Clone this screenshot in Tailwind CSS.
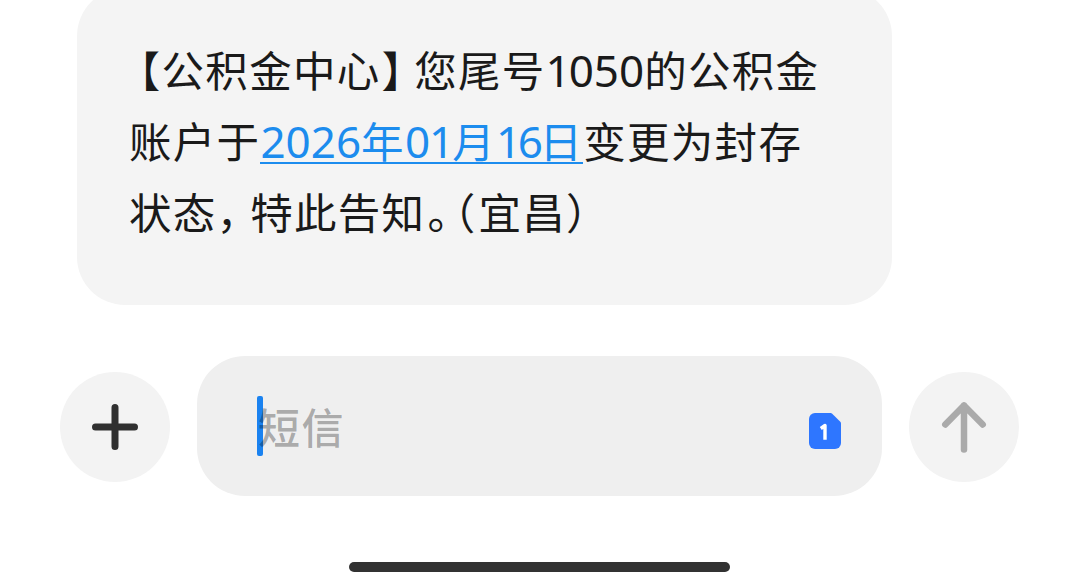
<!doctype html>
<html lang="zh-CN">
  <head>
    <meta charset="UTF-8" />
    <title>短信</title>
    <script src="https://cdn.jsdelivr.net/npm/@tailwindcss/browser@4"></script>
  </head>

  <body class="bg-white h-[588px] overflow-hidden font-['Noto_Sans_CJK_SC',sans-serif]">
    <main class="flex flex-col h-full">
      <!-- received message, half-width punctuation -->
      <div class="-mt-3 ml-[77px] w-[815px] h-[317px] shrink-0 rounded-[48px] bg-[#f4f4f4] pl-[52px] pt-[45px] text-[42.5px] leading-[71px] tracking-[1.3px] text-[#1a1a1a] whitespace-nowrap [font-feature-settings:'halt']">
        <p class="h-[71px] pl-[10px]">【公积金中心<span class="ml-px mr-[10px]">】</span>您尾号<span class="font-['Noto_Sans'] text-[44px] tracking-normal"><span class="-mr-0.5">1</span>050</span>的公积金</p>
        <p class="h-[71px]">账户于<a href="#" class="relative inline-block h-[71px] text-[#1c8cee]"><span class="font-['Noto_Sans'] text-[44px] tracking-normal">2026</span>年<span class="font-['Noto_Sans'] text-[44px] tracking-normal">0<span class="-ml-px -mr-0.5">1</span></span>月<span class="font-['Noto_Sans'] text-[44px] tracking-[-3.5px]">16</span>日<span class="absolute inset-x-0 top-[58px] h-0.5 bg-[#1c8cee]"></span></a>变更为封存</p>
        <p class="h-[71px]">状态<span class="mr-[11px]">，</span>特此告知<span class="ml-0.5 mr-1">。</span><span class="mr-0.5">（</span>宜昌）</p>
      </div>

      <!-- composer -->
      <div class="mt-[51px] flex items-center pl-[60px]">
        <button class="mt-0.5 size-[110px] rounded-full bg-[#f3f3f3] flex items-center justify-center">
          <svg class="size-[46px]" viewBox="0 0 46 46" fill="none" stroke="#303030" stroke-width="7" stroke-linecap="round">
            <path d="M23 3.5v39M3.5 23h39" />
          </svg>
        </button>
        <div class="ml-[27px] w-[685px] h-[140px] rounded-[48px] bg-[#efefef] flex items-center justify-between pl-[60px] pr-[41px]">
          <div class="flex items-center">
            <span class="w-1.5 h-[60px] rounded-xs bg-[#1a82f0]"></span>
            <span class="-ml-[5px] -mt-0.5 text-[42px] font-medium tracking-[1.5px] text-black/30">短信</span>
          </div>
          <svg class="mt-2.5 w-8 h-9" viewBox="0 0 32 36">
            <path d="M6 0h15.500q1 0 1.700.7l8.100 8.100q.7.7.7 1.700V30a6 6 0 0 1-6 6H6a6 6 0 0 1-6-6V6a6 6 0 0 1 6-6z" fill="#2e76ff" />
            <path d="M11.800 15.500l4.200-3v14.300" fill="none" stroke="#fff" stroke-width="3.400" stroke-linejoin="round" />
          </svg>
        </div>
        <button class="mt-0.5 ml-[27px] size-[110px] rounded-full bg-[#f3f3f3] flex items-center justify-center">
          <svg class="w-[46px] h-[52px]" viewBox="0 0 46 52" fill="none" stroke="#aaa" stroke-width="6.500" stroke-linecap="round" stroke-linejoin="round">
            <path d="M23 48.500V4.500M4.300 23.500L23 4.500l18.700 19" />
          </svg>
        </button>
      </div>

      <div class="ml-[349px] mt-[66px] w-[381px] h-2.5 rounded-full bg-[#323232]"></div>
    </main>
  </body>
</html>
